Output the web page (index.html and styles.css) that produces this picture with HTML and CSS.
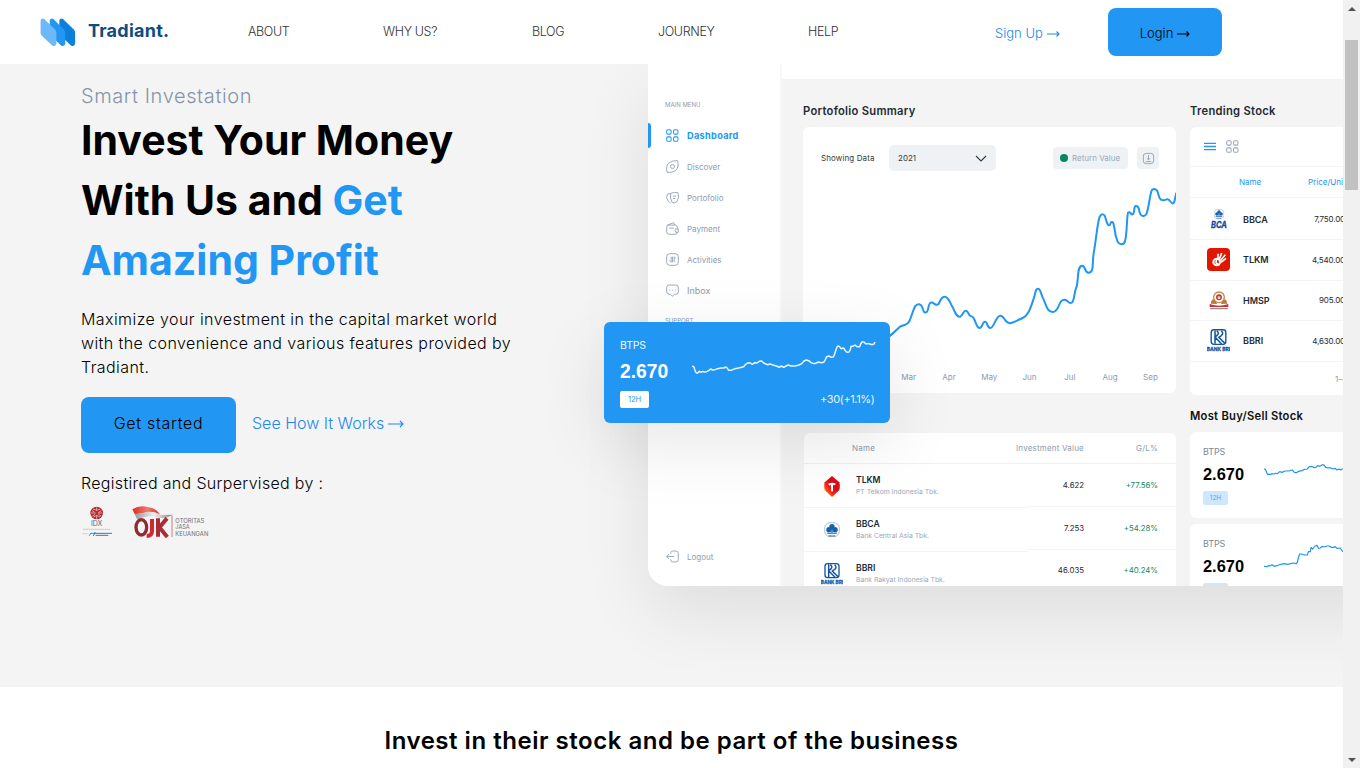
FILE: index.html
```html
<!DOCTYPE html>
<html lang="en">
<head>
<meta charset="utf-8">
<title>Tradiant.</title>
<link rel="stylesheet" href="styles.css">
</head>
<body>
<svg width="0" height="0" class="defs">
  <symbol id="bri" viewBox="0 0 66 66">
    <rect x="12" y="2" width="42" height="42" rx="8" fill="#fff" stroke="#14559f" stroke-width="4"/>
    <path d="M23 4v38M28 5q9 8 0 14l-5 4 19 20M41 5q8 8 0 14l-7 5 17 17" fill="none" stroke="#14559f" stroke-width="4.5"/>
    <text x="33" y="64" font-size="15" font-weight="bold" fill="#14559f" stroke="#14559f" stroke-width=".8" text-anchor="middle" textLength="67" lengthAdjust="spacingAndGlyphs">BANK BRI</text>
  </symbol>
  <symbol id="clover" viewBox="0 0 46 46">
    <rect x="2" y="2" width="42" height="40" rx="15" fill="none" stroke="#7ba6cf" stroke-width="2"/>
    <circle cx="23" cy="13" r="7.5" fill="#165fae"/><circle cx="14" cy="22" r="7.5" fill="#165fae"/><circle cx="32" cy="22" r="7.5" fill="#165fae"/>
    <path d="M21 18h4v12h-4zM9 31h28v3H9z" fill="#165fae"/><path d="M13 40h20" stroke="#2c6db3" stroke-width="4" stroke-dasharray="3 1"/>
  </symbol>
  <symbol id="grid4" viewBox="0 0 38 38">
    <g fill="none" stroke="currentColor" stroke-width="3"><rect x="2" y="2" width="13" height="13" rx="4"/><rect x="22" y="2" width="13" height="13" rx="4"/><rect x="2" y="23" width="13" height="13" rx="4"/><rect x="22" y="23" width="13" height="13" rx="4"/></g>
  </symbol>
</svg>
<div class="page">
  <header class="header">
    <svg class="logo" viewBox="119 52 108 88" width="36" height="29">
      <path d="M177 60Q179 51 188 55L221 87Q225 91 225 98V130Q222 140 213 136L181 106Q177 102 177 96Z" fill="#0d7fdb"/>
      <path d="M148 60Q150 51 159 55L191 87Q195 91 195 98V130Q192 140 183 136L152 106Q148 102 148 96Z" fill="#2196f3"/>
      <path d="M120 60Q122 51 131 55L164 87Q168 91 168 98V130Q165 140 156 136L124 106Q120 102 120 96Z" fill="#6cb8f8"/>
    </svg>
    <span class="brand">Tradiant.</span>
    <nav class="nav"><a>ABOUT</a><a>WHY US?</a><a>BLOG</a><a>JOURNEY</a><a>HELP</a></nav>
    <a class="signup">Sign Up <svg width="13" height="8" viewBox="0 0 13 8"><path d="M0 4h12M9.5 1.5 12 4 9.5 6.5"/></svg></a>
    <a class="login">Login <svg width="13" height="8" viewBox="0 0 13 8"><path d="M0 4h12M9.5 1.5 12 4 9.5 6.5"/></svg></a>
  </header>

  <main class="hero">
    <section class="intro">
      <p class="eyebrow">Smart Investation</p>
      <h1>Invest Your Money<br>With Us and <em>Get</em><br><em>Amazing Profit</em></h1>
      <p class="lead">Maximize your investment in the capital market world<br>with the convenience and various features provided by<br>Tradiant.</p>
      <div class="actions"><a class="start">Get started</a><a class="how">See How It Works <svg width="16" height="8" viewBox="0 0 16 8"><path d="M0 4h15M12 1 15 4 12 7"/></svg></a></div>
      <p class="reg">Registired and Surpervised by :</p>
      <div class="partners">
        <svg width="31" height="32" viewBox="66 377 93 96">
          <circle cx="110" cy="398" r="19" fill="#b5282d"/><path d="M99 386q11 8 22 0M93 398h14m6 0h14M100 410q10-9 20 0M110 381v10m0 14v12M96 391l8 5m20-5-8 5m-19 11 8-5m18 5-8-5" stroke="#f4dcdc" stroke-width="2" fill="none"/>
          <text x="110" y="438" font-size="21" text-anchor="middle" fill="#67676b" textLength="34">IDX</text>
          <path d="M69 447h82" stroke="#bbb" stroke-width="2.5" stroke-dasharray="5 1"/><path d="M68 460h18" stroke="#9bb" stroke-width="2" stroke-dasharray="4 1"/><path d="M88 466q4-11 9-7t8-3q-2 6-5 11M104 459h52M107 465h38" stroke="#2b80b8" stroke-width="3" fill="none"/>
        </svg>
        <svg width="77" height="32" viewBox="214 377 231 96">
          <defs><linearGradient id="flag"><stop stop-color="#df2b2b"/><stop offset=".55" stop-color="#f07a68"/><stop offset="1" stop-color="#d9332f"/></linearGradient><linearGradient id="silver"><stop stop-color="#999"/><stop offset=".5" stop-color="#eee"/><stop offset="1" stop-color="#888"/></linearGradient></defs>
          <path d="M215 387Q238 373 263 381 285 383 298 402 277 393 258 396 239 402 222 401Z" fill="url(#flag)"/>
          <path d="M222 401Q242 401 258 395 280 392 299 404L337 403 314 414Q292 414 277 407 252 407 230 418Z" fill="url(#silver)"/>
          <ellipse cx="242" cy="441" rx="16" ry="23" fill="none" stroke="#8f2b31" stroke-width="10"/>
          <path d="M274 416v36q0 15-16 15" fill="none" stroke="#cf2932" stroke-width="12"/><path d="M292 414v55M319 414l-23 27 24 29" fill="none" stroke="#a92d34" stroke-width="12"/>
          <path d="M334 406v64" stroke="#b5474b" stroke-width="2"/>
          <g fill="#6e6e72" font-size="18"><text x="344" y="429" textLength="87" lengthAdjust="spacingAndGlyphs">OTORITAS</text><text x="344" y="447" textLength="43" lengthAdjust="spacingAndGlyphs">JASA</text><text x="344" y="466" textLength="99" lengthAdjust="spacingAndGlyphs">KEUANGAN</text></g>
        </svg>
      </div>
    </section>

    <section class="preview">
      <div class="dashboard">
        <aside class="sidebar">
          <p class="menu-label">MAIN MENU</p>
          <ul class="menu">
            <li class="active"><svg class="ic"><use href="#grid4"/></svg><span>Dashboard</span></li>
            <li><svg class="ic" viewBox="0 0 38 38"><path d="M8 9Q20 0 34 2 39 20 28 31 15 38 3 36-1 18 8 9Z"/><circle cx="19" cy="19" r="6"/></svg><span>Discover</span></li>
            <li><svg class="ic" viewBox="0 0 38 38"><path d="M14 7Q24 2 35 5 40 20 32 31 25 37 18 34 10 20 14 7ZM14 7 4 9Q-2 20 7 31L13 35M21 15h9M20 22h7"/></svg><span>Portofolio</span></li>
            <li><svg class="ic" viewBox="0 0 38 38"><path d="M33 20V15Q33 9 27 9H8Q2 9 2 15V29Q2 36 9 36H26Q33 36 33 30M4 9 22 2 26 9M10 18h13M36 20h-7q-5 5 0 10h7z"/></svg><span>Payment</span></li>
            <li><svg class="ic" viewBox="0 0 38 38"><rect x="2" y="2" width="34" height="34" rx="9"/><path d="M15 11v16l-5-5M19 11v16M24 27V11l5 5"/></svg><span>Activities</span></li>
            <li><svg class="ic" viewBox="0 0 38 38"><path d="M9 3H29Q36 3 36 10V23Q36 30 29 30H25L19 36 13 30H9Q2 30 2 23V10Q2 3 9 3ZM10 18h3m5 0h3m5 0h3"/></svg><span class="inbox">Inbox</span></li>
          </ul>
          <p class="menu-label support">SUPPORT</p>
          <p class="logout"><svg class="ic" viewBox="0 0 38 38"><path d="M14 11V8Q14 3 20 3H29Q36 3 36 10V28Q36 35 29 35H20Q14 35 14 28V27M24 19H2M9 12 2 19 9 26"/></svg><span>Logout</span></p>
        </aside>
        <div class="main">
          <div class="topbar"></div>
          <div class="content">
            <div class="col">
              <h2>Portofolio Summary</h2>
              <div class="card chart-card">
                <div class="tools"><span class="showing">Showing Data</span><span class="select">2021<svg width="12" height="7" viewBox="0 0 12 7"><path d="M1 1 6 6 11 1"/></svg></span><span class="pill"><i></i>Return Value</span><span class="dl"><svg class="ic" viewBox="0 0 38 38"><rect x="4" y="4" width="30" height="30" rx="8"/><path d="M19 9v13M14 18l5 5 5-5M11 28h16"/></svg></span></div>
                <svg class="chart" width="373" height="185" viewBox="39 255 1119 555"><path d="M280 745C302 743 310 727 330 710 345 701 350 709 358 694 366 675 370 657 377 647 384 640 393 641 397 652 401 664 401 668 408 667 416 667 414 641 422 638 432 635 436 650 445 643 452 633 452 620 464 620 477 620 480 640 487 650 497 670 500 682 510 680 519 678 520 660 528 662 536 663 535 678 543 679 556 678 556 712 568 714 579 714 576 695 585 695 594 695 590 714 601 714 613 714 617 677 631 677 645 677 644 704 663 699 674 696 686 690 698 684 718 675 724 645 733 620 737 604 737 596 744 596 752 596 752 610 758 622 769 645 770 665 788 666 810 665 803 630 822 629 836 628 833 643 845 638 854 633 852 605 860 590 866 565 861 528 876 527 889 528 882 548 896 548 913 547 906 520 911 490 919 445 921 405 929 380 934 371 943 370 946 382 950 394 950 405 957 406 964 405 959 394 967 396 975 400 971 425 982 453 987 465 1002 467 1005 453 1012 428 1009 393 1014 368 1021 362 1022 375 1028 373 1035 371 1030 350 1037 348 1050 347 1045 361 1050 370 1056 382 1066 380 1070 370 1078 345 1078 325 1084 304 1087 294 1098 295 1102 303 1107 319 1108 331 1120 331 1131 329 1133 323 1140 333 1147 342 1151 344 1154 331L1159 308"/></svg>
                <div class="months"><span>Mar</span><span>Apr</span><span>May</span><span>Jun</span><span>Jul</span><span>Aug</span><span>Sep</span></div>
              </div>
              <div class="card holdings">
                <div class="h-head"><span>Name</span><span class="iv">Investment Value</span><span class="gl">G/L%</span></div>
                <div class="h-body">
                  <div class="names">
                    <div class="n-row"><svg width="16" height="21" viewBox="102 166 48 63"><defs><linearGradient id="tel" x1="1" y1="0" x2="0" y2="1"><stop offset=".45" stop-color="#d80e18"/><stop offset=".65" stop-color="#ff2018"/><stop offset="1" stop-color="#ffc400"/></linearGradient></defs><path d="M126 166L148 185Q151 196 148 208L126 229 104 208Q101 196 104 185Z" fill="url(#tel)"/><path d="M116 192q10-5 20-1M126 190v22" stroke="#fff" stroke-width="6" fill="none"/></svg><p><b>TLKM</b><small>PT Telkom Indonesia Tbk.</small></p></div>
                    <div class="n-row"><svg width="16" height="16"><use href="#clover"/></svg><p><b>BBCA</b><small>Bank Central Asia Tbk.</small></p></div>
                    <div class="n-row"><svg width="22" height="22"><use href="#bri"/></svg><p><b>BBRI</b><small>Bank Rakyat Indonesia Tbk.</small></p></div>
                  </div>
                  <div class="values"><div class="v-row"><span>4.622</span><span class="up">+77.56%</span></div><div class="v-row"><span>7.253</span><span class="up">+54.28%</span></div><div class="v-row"><span>46.035</span><span class="up">+40.24%</span></div></div>
                </div>
              </div>
            </div>
            <div class="col side">
              <h2>Trending Stock</h2>
              <div class="card trending">
                <div class="views"><svg width="12" height="9" viewBox="0 0 12 9"><path d="M0 1.3h12M0 4.5h12M0 7.7h12" stroke="#2196f3" stroke-width="1.3"/></svg><svg class="g" width="13" height="13"><use href="#grid4"/></svg></div>
                <div class="t-head"><span>Name</span><span>Price/Unit</span></div>
                <div class="t-row first"><span class="mark"><svg width="18" height="20" viewBox="0 0 54 60"><use href="#clover" x="11" y="0" width="32" height="32"/><text x="27" y="57" font-size="26" font-weight="bold" font-style="italic" fill="#174b9c" stroke="#174b9c" text-anchor="middle" textLength="48" lengthAdjust="spacingAndGlyphs">BCA</text></svg></span><b>BBCA</b><span class="price">7,750.00</span></div>
                <div class="t-row"><span class="mark"><svg width="23" height="23" viewBox="0 0 69 69"><rect width="69" height="69" rx="12" fill="#df1600"/><circle cx="29" cy="42" r="10" fill="none" stroke="#fff" stroke-width="6"/><path d="M29 30 27 44l10 8M33 32 33 17M37 34 44 15M40 38 55 20M42 43 57 31" stroke="#fff" stroke-width="5" fill="none"/></svg></span><b>TLKM</b><span class="price">4,540.00</span></div>
                <div class="t-row"><span class="mark"><svg width="20" height="19" viewBox="0 0 60 57"><circle cx="30" cy="19" r="16" fill="#fff" stroke="#c18a4d" stroke-width="4"/><circle cx="30" cy="19" r="9" fill="#c73736"/><path d="M26 16h8v8h-8z" fill="#f4cfc2"/><path d="M5 38q2-16 11-12l9 13zm50 0q-2-16-11-12l-9 13z" fill="#b8793e"/><path d="M2 39q28 10 56 0v9H2z" fill="#cb302e"/><path d="M4 53h52" stroke="#655" stroke-width="4" stroke-dasharray="4 2"/></svg></span><b>HMSP</b><span class="price">905.00</span></div>
                <div class="t-row"><span class="mark"><svg width="23" height="23"><use href="#bri"/></svg></span><b>BBRI</b><span class="price">4,630.00</span></div>
                <div class="t-foot">1–4</div>
              </div>
              <h2 class="t3">Most Buy/Sell Stock</h2>
              <div class="card stock"><div><span class="tick">BTPS</span><strong>2.670</strong><span class="badge">12H</span></div><svg width="79" height="20" viewBox="252 185 237 60"><path d="M252 209 256 210 263 226 267 224 270 226 275 223 282 224 286 222 292 223 299 217 306 219 315 215 325 215 337 212 344 220 350 220 355 216 366 214 373 210 382 209 388 202 396 201 402 205 408 204 413 199 419 201 427 196 433 198 437 204 445 206 451 205 459 209 465 207 471 212 477 209 482 212 489 208"/></svg></div>
              <div class="card stock second"><div><span class="tick">BTPS</span><strong>2.670</strong><span class="badge">12H</span></div><svg width="79" height="28" viewBox="252 430 237 84"><path d="M252 500 260 501 265 498 270 499 276 495 283 500 291 498 296 496 303 494 313 492 323 494 332 492 340 490 349 492 352 488 355 475 359 463 364 463 369 465 377 466 382 466 385 456 391 456 393 443 398 448 405 439 411 437 415 446 421 445 426 440 433 442 441 439 448 439 453 443 461 443 466 441 471 446 480 445 489 457"/></svg></div>
            </div>
          </div>
        </div>
      </div>
      <div class="float">
        <div><span class="tick">BTPS</span><strong>2.670</strong><span class="badge">12H</span></div>
        <div class="f-right"><svg width="184" height="37" viewBox="291 118 552 111"><path d="M292 199 297 202 300 213 304 220 308 220 313 215 318 218 323 215 328 217 335 216 341 213 347 208 353 211 360 210 368 207 378 205 386 205 393 202 397 206 401 212 408 212 420 207 434 204 446 201 452 194 460 189 466 190 472 194 479 189 486 190 493 185 500 184 506 190 517 195 526 193 536 197 545 199 552 203 559 199 566 203 573 199 580 196 588 199 600 199 612 196 620 192 627 184 634 181 641 183 648 189 656 192 664 190 670 187 678 189 686 188 690 182 695 171 702 169 709 173 715 172 719 163 723 150 727 140 733 140 738 147 746 145 751 153 756 158 762 157 766 150 768 140 774 140 780 136 786 141 794 141 797 133 801 127 807 127 812 132 822 132 832 135 837 133 840 127"/></svg><span class="delta">+30(+1.1%)</span></div>
      </div>
    </section>
  </main>
  <section class="partner-title"><h2>Invest in their stock and be part of the business</h2></section>
</div>
<div class="scrollbar"><i class="up-arrow"></i><div class="thumb"></div><i class="down-arrow"></i></div>
</body>
</html>
```
FILE: styles.css
```css
* { box-sizing: border-box; }
body { margin: 0; display: flex; width: 1360px; height: 768px; overflow: hidden; font-family: Inter, "Liberation Sans", sans-serif; background: #fff; color: #000; }
p, h1, h2, ul { margin: 0; padding: 0; }
ul { list-style: none; }
svg { display: block; flex: none; }
.defs { position: absolute; }
.page { width: 1343px; height: 768px; overflow: hidden; white-space: nowrap; }

.header { position: relative; z-index: 2; height: 64px; background: #fff; display: flex; align-items: center; padding-left: 40px; }
.brand { width: 160px; margin-left: 12px; padding-bottom: 3px; font-size: 18px; font-weight: 700; letter-spacing: .25px; color: #0f4c81; }
.nav { display: grid; grid-template-columns: 42px 56px 33px 57px 29px; column-gap: 93px; width: 747px; padding-bottom: 1px; font-size: 12.5px; font-weight: 300; letter-spacing: -.35px; color: #333; }
.signup, .login { display: flex; align-items: center; gap: 4px; font-size: 13px; font-weight: 300; }
.signup { width: 113px; padding-top: 2px; color: #2188f0; }
.signup svg, .login svg, .how svg { fill: none; stroke: currentColor; stroke-width: 1.1; margin-top: 2px; }
.login { width: 114px; height: 48px; padding-top: 2px; justify-content: center; border-radius: 8px; background: #2196f3; }

.hero { height: 623px; display: flex; background: #f4f4f4; overflow: hidden; }
.intro { width: 648px; padding: 18px 0 0 81px; }
.eyebrow { font-size: 20px; line-height: 28px; letter-spacing: .6px; font-weight: 300; color: #8494a9; }
h1 { font-size: 41px; line-height: 60px; font-weight: 700; }
em { font-style: normal; color: #2196f3; }
.lead { margin-top: 17px; font-size: 16px; line-height: 24px; font-weight: 300; letter-spacing: .42px; }
.actions { display: flex; margin-top: 18px; gap: 16px; align-items: center; font-size: 16px; font-weight: 300; }
.start { width: 155px; height: 56px; border-radius: 8px; background: #2196f3; display: flex; align-items: center; justify-content: center; padding-bottom: 4px; letter-spacing: .7px; }
.how { display: flex; gap: 4px; align-items: center; color: #2188f0; padding-bottom: 4px; }
.reg { margin-top: 18px; font-size: 16px; line-height: 24px; font-weight: 300; letter-spacing: .32px; }
.partners { display: flex; gap: 19px; margin: 11px 0 0 1px; }

.preview { position: relative; width: 695px; }
/* the board runs on past the right edge of the page */
.dashboard { display: flex; width: 900px; height: 522px; border-bottom-left-radius: 20px; background: #f4f4f4; box-shadow: 0 28px 70px rgba(0,0,0,.09); }
.sidebar { width: 134px; background: #fff; border-bottom-left-radius: 20px; border-right: 2px solid #f7f7f7; color: #8d9bae; font-size: 8px; padding-top: 36px; }
.menu-label { padding-left: 17px; font-size: 6px; line-height: 10px; }
.menu { padding-top: 10px; }
.menu li { display: flex; align-items: center; height: 31px; gap: 8px; padding-left: 18px; }
.menu li.active { color: #2196f3; font-weight: 700; font-size: 9.2px; letter-spacing: .3px; padding-left: 0; }
.active::before { content: ""; width: 3px; height: 25px; margin-right: 7px; border-radius: 0 3px 3px 0; background: #2196f3; }
.inbox { font-size: 9px; }
.ic { width: 13px; height: 13px; fill: none; stroke: currentColor; stroke-width: 2.5; }
.support { padding-top: 10px; }
.logout { display: flex; gap: 8px; align-items: center; padding: 224px 0 0 18px; }
.main { flex: 1; overflow: hidden; }
.topbar { height: 15px; background: #fff; }
.content { display: flex; gap: 14px; padding-left: 21px; }
.col { width: 373px; flex: none; }
.side { width: 180px; }
.content h2 { font-size: 11.2px; line-height: 16px; font-weight: 600; letter-spacing: .28px; color: #222a33; padding-top: 24px; height: 48px; }
.card { background: #fff; border-radius: 6px; }
.chart-card { height: 266px; padding-top: 18px; }
.tools { display: flex; height: 26px; align-items: center; padding-left: 18px; color: #343a40; font-size: 8px; }
.showing { width: 68px; letter-spacing: .1px; }
.select { width: 107px; height: 26px; border-radius: 5px; background: #eef2f5; display: flex; align-items: center; justify-content: space-between; padding: 0 9px; margin-right: 57px; }
.select svg { fill: none; stroke: #343a40; stroke-width: 1.1; }
.pill { display: flex; align-items: center; gap: 4px; width: 75px; height: 22px; border-radius: 4px; background: #eef2f5; padding-left: 7px; color: #9ba8b8; margin-right: 9px; }
.pill i { width: 8px; height: 8px; border-radius: 50%; background: #078660; }
.dl { width: 22px; height: 22px; border-radius: 4px; background: #eef2f5; display: grid; place-items: center; color: #8d9bae; }
.chart { margin-top: 4px; fill: none; stroke: #2196f3; stroke-width: 6; }
.months { display: flex; padding-left: 85.5px; line-height: 12px; margin-top: 11px; font-size: 8px; color: #8d9bae; }
.months span { width: 40.3px; text-align: center; }
.holdings { margin: 40px 0 0 1px; height: 153px; overflow: hidden; border-radius: 6px 6px 0 0; }
.h-head { height: 31px; display: flex; align-items: center; padding-left: 48px; font-size: 8px; letter-spacing: .2px; color: #8d9bae; border-bottom: 1px solid #f0f0f0; }
.h-head .iv { width: 209px; text-align: right; }
.gl { width: 74px; text-align: right; }
.h-head span:first-child { width: 23px; }
.h-body { display: flex; }
.names { width: 224px; }
.n-row { height: 43.8px; border-bottom: 1px solid #f4f4f4; display: grid; grid-template-columns: 40px 1fr; column-gap: 4px; padding: 2px 0 0 8px; align-items: center; }
.n-row svg { justify-self: center; }
.n-row b { display: block; font-size: 8.6px; line-height: 12px; font-weight: 600; color: #222a33; }
.n-row small { display: block; font-size: 6.8px; line-height: 12px; color: #9ba8b8; }
.values { flex: 1; font-size: 7.8px; color: #222a33; }
.v-row { height: 42.8px; display: flex; align-items: center; border-bottom: 1px solid #f4f4f4; }
.v-row span { width: 56px; text-align: right; }
.v-row .up { width: 74px; color: #16875f; }
.trending { height: 268px; }
.views { height: 40px; display: flex; align-items: center; gap: 10px; padding-left: 14px; border-bottom: 1px solid #f4f4f4; }
.g { color: #9ba8b8; }
.t-head { height: 31px; display: flex; align-items: center; font-size: 8px; color: #2196f3; padding-left: 49px; border-bottom: 1px solid #f4f4f4; }
.t-head span:first-child { width: 69px; }
.t-row { height: 40.6px; display: flex; align-items: center; border-bottom: 1px solid #f4f4f4; color: #222a33; }
.t-row.first { height: 42px; padding-top: 1px; }
.mark { width: 53px; padding-left: 4px; display: grid; place-items: center; }
.t-row b { width: 44px; font-size: 9px; font-weight: 600; }
.price { width: 58px; text-align: right; font-size: 8px; letter-spacing: -.15px; }
.t-foot { padding: 11px 0 0 145px; font-size: 8px; line-height: 12px; color: #8d9bae; }
.content h2.t3 { padding-top: 13px; height: 37px; color: #111; }
.stock { display: flex; height: 86px; padding: 14px 0 0 13px; }
.stock > div { width: 61px; }
.tick { display: block; font-size: 9px; line-height: 12px; letter-spacing: -.15px; color: #78899c; }
.stock strong { display: block; font: 700 16.4px/20px "Liberation Sans", sans-serif; margin-top: 6px; }
.badge { display: block; width: 25px; height: 14px; margin-top: 7px; border-radius: 2px; background: #cfe7fd; color: #4daaf5; font-size: 6.5px; line-height: 14px; text-align: center; }
.stock svg { fill: none; stroke: #2196f3; stroke-width: 3.6; stroke-linejoin: round; margin-top: 15px; }
.stock.second { margin-top: 6px; height: 62px; overflow: hidden; border-radius: 6px 0 0 0; }
.second svg { margin-top: 5px; }
.float { position: absolute; left: -44px; top: 258px; width: 286px; height: 101px; border-radius: 6px; background: #2196f3; color: #fff; display: flex; padding: 17px 0 0 16px; box-shadow: 0 20px 70px rgba(0,0,0,.1); }
.float .tick { color: #f0f8ff; font-size: 10.5px; line-height: 14px; }
.float strong { display: block; font: 700 19.3px/24px "Liberation Sans", sans-serif; margin-top: 7px; }
.float .badge { width: 29px; height: 17px; line-height: 17px; background: #fff; color: #2196f3; font-size: 7.5px; }
.f-right { margin-left: 24px; display: flex; flex-direction: column; align-items: flex-end; }
.f-right svg { fill: none; stroke: #e9f5ff; stroke-width: 4.5; stroke-linejoin: round; }
.delta { margin: 16px 2px 0 0; font-size: 11px; line-height: 14px; color: #e9f5ff; letter-spacing: -.4px; }

.partner-title { text-align: center; padding-top: 36px; }
.partner-title h2 { font-size: 24px; line-height: 36px; font-weight: 600; letter-spacing: .52px; }
.scrollbar { width: 17px; height: 768px; background: #f1f1f1; display: flex; flex-direction: column; align-items: center; padding: 7px 0 6px; }
.up-arrow, .down-arrow { border: solid transparent; border-width: 0 4px; }
.up-arrow { border-bottom: 4px solid #505050; }
.down-arrow { border-top: 4px solid #505050; margin-top: auto; }
.thumb { width: 13px; height: 150px; margin-top: 29px; background: #c1c1c1; }
```
